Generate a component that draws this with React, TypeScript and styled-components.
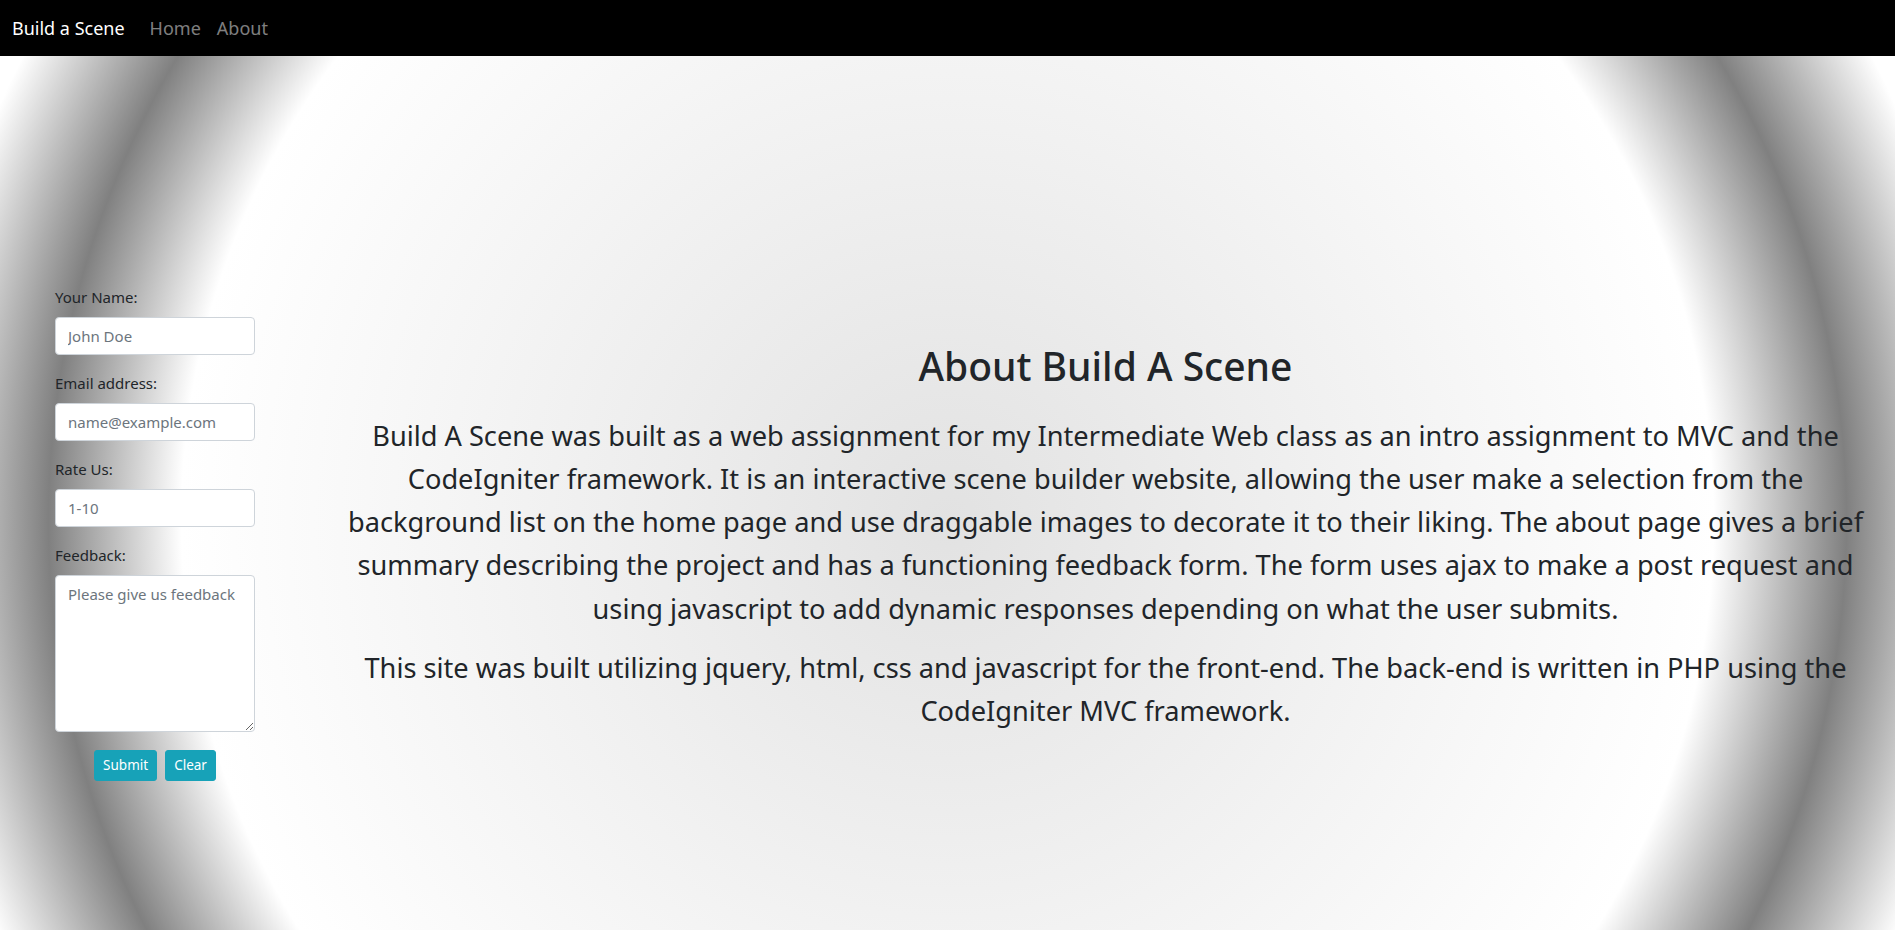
import React from 'react';
import styled, { createGlobalStyle } from 'styled-components';

const Global = createGlobalStyle`
  html, body { margin: 0; padding: 0; }
  body {
    font-family: "Noto Sans", "Open Sans", sans-serif;
    color: #212529;
    background: #fff;
    overflow: hidden;
  }
  * { box-sizing: border-box; }
`;

const Nav = styled.nav`
  height: 56px;
  background: #000;
  display: flex;
  align-items: center;
  padding: 0 12px;
`;

const Brand = styled.a`
  color: #fff;
  font-size: 18px;
  line-height: 27px;
  margin-right: 17px;
  text-decoration: none;
`;

const NavLink = styled.a`
  color: rgba(255, 255, 255, 0.5);
  font-size: 18px;
  line-height: 27px;
  padding: 8px;
  text-decoration: none;
`;

const Main = styled.main`
  height: 874px;
  display: flex;
  align-items: center;
  padding-top: 80px;
  background: radial-gradient(
    circle at 50% 465px,
    #e2e2e2 0px,
    #ffffff 766px,
    #808080 899px,
    #ffffff 1035px
  );
`;

const FormCol = styled.div`
  width: 316px;
  flex: none;
  padding: 0 15px 0 55px;
`;

const Form = styled.form`
  width: 200px;
  display: flex;
  flex-direction: column;
`;

const Label = styled.label`
  display: block;
  font-size: 15px;
  line-height: 24px;
  margin-bottom: 8px;
  color: #212529;
`;

const fieldBase = `
  display: block;
  width: 200px;
  padding: 6px 12px;
  font-family: "Noto Sans", "Open Sans", sans-serif;
  font-size: 15px;
  line-height: 24px;
  color: #495057;
  background: #fff;
  border: 1px solid #ced4da;
  border-radius: 4px;
  margin: 0 0 16px;
  outline: none;
  &::placeholder { color: #6c757d; opacity: 1; }
`;

const Input = styled.input`
  ${fieldBase}
  height: 38px;
`;

const TextArea = styled.textarea`
  ${fieldBase}
  height: 157px;
  resize: vertical;
`;

const ButtonRow = styled.div`
  display: flex;
  justify-content: center;
  gap: 8px;
  margin-top: 2px;
`;

const Button = styled.button`
  font-family: "Noto Sans", "Open Sans", sans-serif;
  font-size: 13.5px;
  line-height: 21px;
  padding: 4px 8px;
  color: #fff;
  background: #17a2b8;
  border: 1px solid #17a2b8;
  border-radius: 3px;
  cursor: pointer;
`;

const TextCol = styled.section`
  flex: 1;
  padding: 24px 15px 0;
  text-align: center;
`;

const Heading = styled.h1`
  font-size: 39px;
  font-weight: 500;
  line-height: 48px;
  margin: 0 0 24px;
`;

const Para = styled.p`
  font-size: 27.2px;
  line-height: 43.2px;
  margin: 0 0 16px;
`;

export default function App() {
  return (
    <>
      <Global />
      <Nav>
        <Brand href="#">Build a Scene</Brand>
        <NavLink href="#">Home</NavLink>
        <NavLink href="#">About</NavLink>
      </Nav>
      <Main>
        <FormCol>
          <Form onSubmit={(e) => e.preventDefault()}>
            <Label>Your Name:</Label>
            <Input type="text" placeholder="John Doe" />
            <Label>Email address:</Label>
            <Input type="email" placeholder="name@example.com" />
            <Label>Rate Us:</Label>
            <Input type="text" placeholder="1-10" />
            <Label>Feedback:</Label>
            <TextArea placeholder="Please give us feedback" />
            <ButtonRow>
              <Button type="submit">Submit</Button>
              <Button type="reset">Clear</Button>
            </ButtonRow>
          </Form>
        </FormCol>
        <TextCol>
          <Heading>About Build A Scene</Heading>
          <Para>
            Build A Scene was built as a web assignment for my Intermediate Web class as an intro
            assignment to MVC and the CodeIgniter framework. It is an interactive scene builder
            website, allowing the user make a selection from the background list on the home page
            and use draggable images to decorate it to their liking. The about page gives a brief
            summary describing the project and has a functioning feedback form. The form uses ajax
            to make a post request and using javascript to add dynamic responses depending on what
            the user submits.
          </Para>
          <Para>
            This site was built utilizing jquery, html, css and javascript for the front-end. The
            back-end is written in PHP using the CodeIgniter MVC framework.
          </Para>
        </TextCol>
      </Main>
    </>
  );
}
